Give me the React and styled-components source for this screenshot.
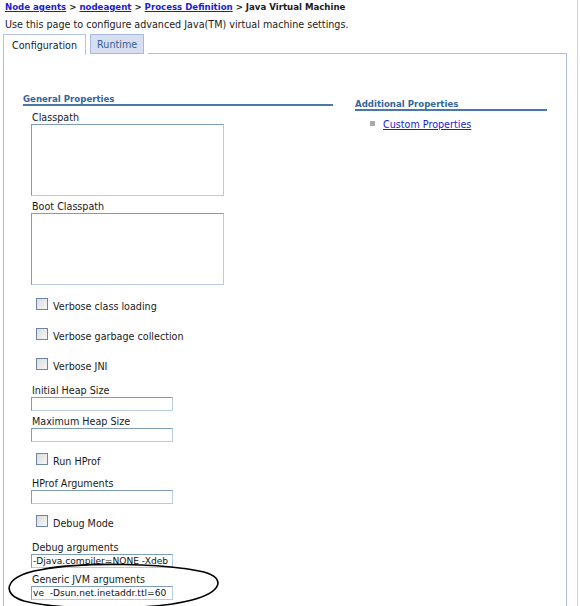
import styled, {createGlobalStyle} from 'styled-components'

const GlobalStyle = createGlobalStyle`
  html, body {
    margin: 0;
    padding: 0;
    background: #ffffff;
    overflow: hidden;
  }
  body {
    font-family: 'DejaVu Sans', Verdana, sans-serif;
    font-size: 9.6px;
    color: #1a1a1a;
  }
`

const Page = styled.div`
  position: relative;
  width: 577px;
  height: 606px;
  border-right: 1px solid #d4d4d4;
  overflow: hidden;
`
const Breadcrumb = styled.div`
  padding: 2px 0 0 5px;
  font-size: 8.6px;
  font-weight: bold;
  line-height: 11px;
`
const CrumbLink = styled.a`
  color: #1c1ccc;
  text-decoration: underline;
`
const Intro = styled.p`
  margin: 6px 0 0 5px;
  line-height: 11px;
`
const Tabs = styled.div`
  display: flex;
  align-items: flex-end;
  margin: 4px 0 0 3px;
  width: 564px;
`
const Tab = styled.div`
  height: ${p => (p.active ? '20px' : '18px')};
  padding: 0 ${p => (p.active ? '8px' : '6px')};
  margin-right: 4px;
  display: flex;
  align-items: center;
  color: ${p => (p.active ? '#222' : '#3a5f96')};
  background: ${p => (p.active ? '#ffffff' : '#d6deef')};
  border: 1px solid ${p => (p.active ? '#b3c4e8' : '#a6b8de')};
  border-bottom: ${p => (p.active ? 'none' : '1px solid #a6b8de')};
  margin-bottom: ${p => (p.active ? '-1px' : '0')};
`
const TabFiller = styled.div`
  flex: 1;
  border-bottom: 1px solid #a9bde6;
`
const Panel = styled.div`
  margin-left: 3px;
  width: 562px;
  height: 600px;
  border: 1px solid #a9bde6;
  border-top: none;
  display: flex;
  padding-top: 40px;
`
const LeftColumn = styled.div`
  margin-left: 19px;
  width: 310px;
`
const RightColumn = styled.div`
  margin-left: 22px;
  width: 192px;
  padding-top: 5px;
`
const SectionTitle = styled.h2`
  margin: 0;
  font-size: 8.6px;
  font-weight: bold;
  color: #33669a;
  line-height: 10px;
  border-bottom: 2px solid #4a78aa;
`
const FieldBlock = styled.div`
  margin-left: 8px;
  margin-top: ${p => p.top}px;
`
const Label = styled.div`
  line-height: 10px;
  margin-left: 1px;
`
const Area = styled.textarea`
  display: block;
  box-sizing: border-box;
  width: 193px;
  height: 72px;
  margin-top: 1px;
  border: 1px solid #7f9db9;
  border-right-color: #b9cbe0;
  border-bottom-color: #b9cbe0;
  resize: none;
  padding: 0;
`
const TextInput = styled.input`
  display: block;
  box-sizing: border-box;
  width: 142px;
  height: 14px;
  margin-top: 1px;
  margin-left: 0;
  border: 1px solid #7f9db9;
  border-right-color: #b9cbe0;
  border-bottom-color: #b9cbe0;
  padding: 0 1px;
  font-family: 'DejaVu Sans', Verdana, sans-serif;
  font-size: 9.1px;
  color: #111;
  outline: none;
`
const CheckRow = styled.div`
  display: flex;
  align-items: flex-end;
  margin-left: 13px;
  margin-top: ${p => p.top}px;
`
const Box = styled.span`
  box-sizing: border-box;
  width: 12px;
  height: 12px;
  border: 1px solid #6b86a6;
  background: linear-gradient(135deg, #dcdcdc, #f6f6f6);
`
const CheckText = styled.span`
  margin-left: 5px;
  line-height: 10px;
  margin-bottom: -2px;
`
const LinkRow = styled.div`
  display: flex;
  align-items: center;
  margin: 8px 0 0 15px;
`
const Bullet = styled.span`
  width: 5px;
  height: 5px;
  background: #a9a9a9;
  margin-right: 8px;
  margin-top: -3px;
`
const PropLink = styled.a`
  color: #1c1ccc;
  text-decoration: underline;
`
const Annotation = styled.svg`
  position: absolute;
  left: 4px;
  top: 561px;
`

const fields = [
  {kind: 'area', label: 'Classpath', top: 7},
  {kind: 'area', label: 'Boot Classpath', top: 6},
  {kind: 'check', label: 'Verbose class loading', top: 13},
  {kind: 'check', label: 'Verbose garbage collection', top: 18},
  {kind: 'check', label: 'Verbose JNI', top: 18},
  {kind: 'input', label: 'Initial Heap Size', top: 16},
  {kind: 'input', label: 'Maximum Heap Size', top: 6},
  {kind: 'check', label: 'Run HProf', top: 11},
  {kind: 'input', label: 'HProf Arguments', top: 14},
  {kind: 'check', label: 'Debug Mode', top: 11},
  {kind: 'input', label: 'Debug arguments', top: 16, value: '-Djava.compiler=NONE -Xdeb'},
  {kind: 'input', label: 'Generic JVM arguments', top: 7, value: 've  -Dsun.net.inetaddr.ttl=60'},
]

const renderField = each => {
  if (each.kind === 'check') {
    return (
      <CheckRow key={each.label} top={each.top}>
        <Box />
        <CheckText>{each.label}</CheckText>
      </CheckRow>
    )
  }
  return (
    <FieldBlock key={each.label} top={each.top}>
      <Label>{each.label}</Label>
      {each.kind === 'area' ? (
        <Area />
      ) : (
        <TextInput readOnly value={each.value || ''} />
      )}
    </FieldBlock>
  )
}

const App = () => (
  <Page>
    <GlobalStyle />
    <Breadcrumb>
      <CrumbLink>Node agents</CrumbLink> &gt; <CrumbLink>nodeagent</CrumbLink> &gt;{' '}
      <CrumbLink>Process Definition</CrumbLink> &gt; Java Virtual Machine
    </Breadcrumb>
    <Intro>Use this page to configure advanced Java(TM) virtual machine settings.</Intro>
    <Tabs>
      <Tab active>Configuration</Tab>
      <Tab>Runtime</Tab>
      <TabFiller />
    </Tabs>
    <Panel>
      <LeftColumn>
        <SectionTitle>General Properties</SectionTitle>
        {fields.map(renderField)}
      </LeftColumn>
      <RightColumn>
        <SectionTitle>Additional Properties</SectionTitle>
        <LinkRow>
          <Bullet />
          <PropLink>Custom Properties</PropLink>
        </LinkRow>
      </RightColumn>
    </Panel>
    <Annotation width="220" height="50" viewBox="0 0 220 50">
      <path
        d="M40 8 C 80 1, 160 2, 200 11 C 222 17, 218 31, 188 39 C 150 49, 60 50, 20 40 C -3 33, 1 17, 30 10 C 50 6, 70 4, 95 3"
        fill="none"
        stroke="#000"
        strokeWidth="1.6"
      />
    </Annotation>
  </Page>
)

export default App
